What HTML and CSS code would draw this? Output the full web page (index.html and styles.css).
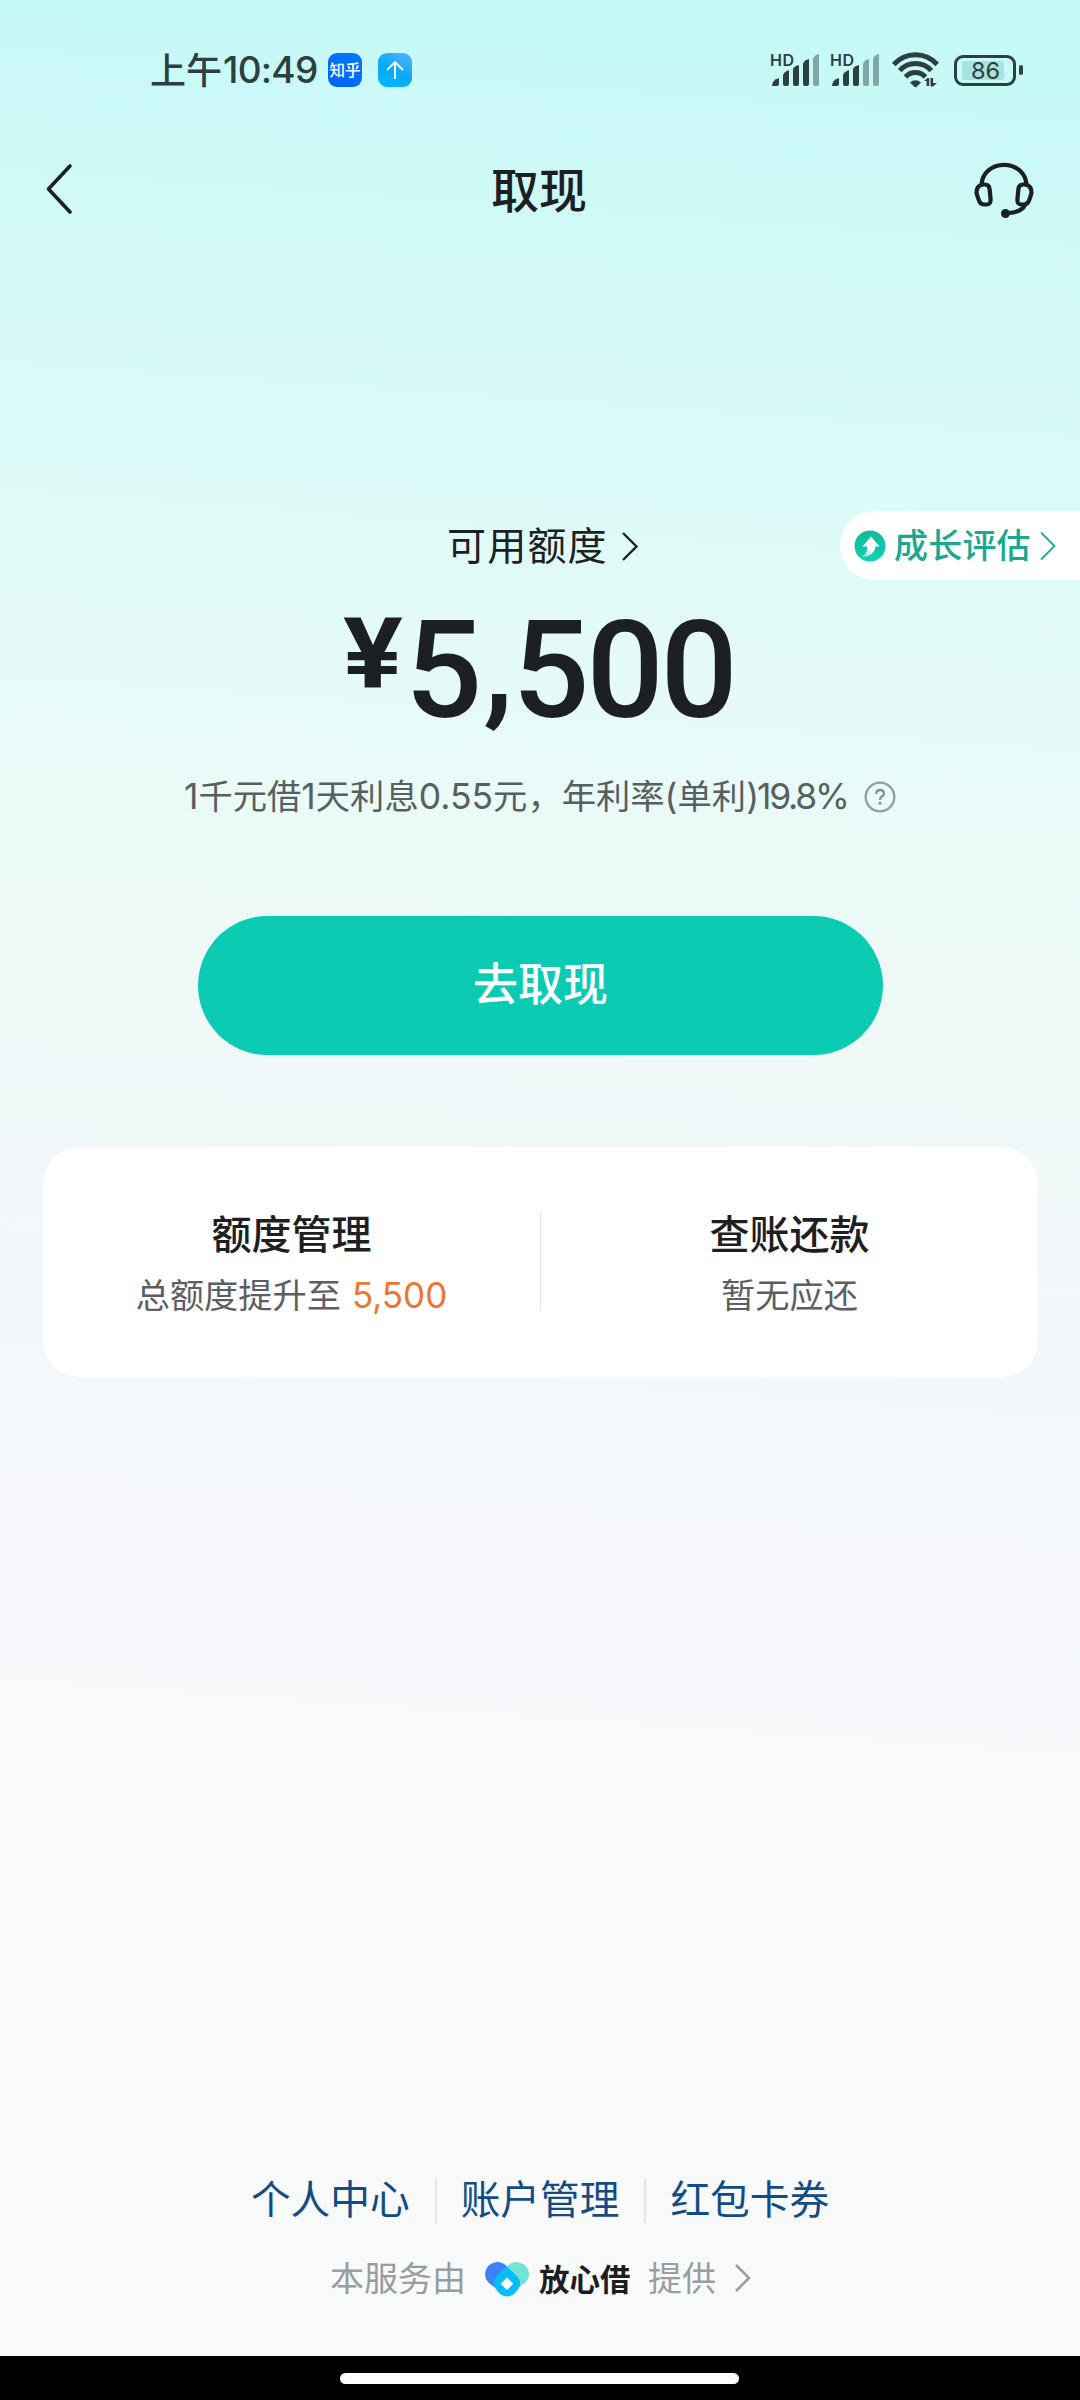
FILE: index.html
```html
<!DOCTYPE html>
<html lang="zh-CN">
<head>
<meta charset="utf-8">
<title>取现</title>
<link rel="stylesheet" href="styles.css">
</head>
<body>
<div class="screen">
  <header class="status">
    <div class="clock"><span class="cjk">上午</span><span class="num">10:49</span></div>
    <div class="app zhihu">知乎</div>
    <div class="app upload"><svg width="34" height="34" viewBox="0 0 34 34"><path d="M17 26V9M9 17l8-8 8 8" fill="none" stroke="#fff" stroke-width="1.9"/></svg></div>
    <div class="system">
      <svg width="50" height="42" viewBox="0 -4 50 42" fill="#2c4042"><text x="0" y="13" class="hd" textLength="24">HD</text><path d="M2 33q0-6 7-8v6q0 2-2 2z"/><path d="M13 22q1-3 6-5v14q0 2-2 2h-2q-2 0-2-2z"/><path d="M23 16q1-3 6-4v19q0 2-2 2h-2q-2 0-2-2z"/><path d="M33 11q1-4 6-5v25q0 2-2 2h-2q-2 0-2-2z"/><path opacity=".45" d="M43 6q1-4 6-5v30q0 2-2 2h-2q-2 0-2-2z"/></svg>
      <svg width="50" height="42" viewBox="0 -4 50 42" fill="#2c4042"><text x="0" y="13" class="hd" textLength="24">HD</text><path d="M2 33q0-6 7-8v6q0 2-2 2z"/><path d="M13 22q1-3 6-5v14q0 2-2 2h-2q-2 0-2-2z"/><path d="M23 16q1-3 6-4v19q0 2-2 2h-2q-2 0-2-2z"/><path opacity=".45" d="M33 11q1-4 6-5v25q0 2-2 2h-2q-2 0-2-2z"/><path opacity=".45" d="M43 6q1-4 6-5v30q0 2-2 2h-2q-2 0-2-2z"/></svg>
      <svg class="wifi" width="48" height="36" viewBox="0 0 48 36"><g fill="none" stroke="#2c4042" stroke-width="4.900"><path d="M1.800 12.500A29 29 0 0 1 45.200 12.500"/><path d="M7.700 18.700A21 21 0 0 1 39.300 18.700"/><path d="M13.500 25A13.500 13.500 0 0 1 33.500 25"/></g><path d="M18 30.500q5.500-4.500 11 0l-4 4q-1.500 1.500-3 0zM32 29l3.500-3h1.700v8h-2.600v-5zM38.500 26h2.600v5H45l-4 3.500h-2.500z" fill="#2c4042"/></svg>
      <div class="battery"><span class="num">86</span></div><i class="cap"></i>
    </div>
  </header>
  <nav class="nav">
    <svg class="back" width="30" height="54" viewBox="0 0 30 54"><path d="M26 4L4.500 27 26 50" fill="none" stroke="#1c2023" stroke-width="3.600" stroke-linecap="round" stroke-linejoin="round"/></svg>
    <h1>取现</h1>
    <svg width="60" height="58" viewBox="0 0 60 58" fill="none" stroke="#1b2023" stroke-width="4.200" stroke-linecap="round"><path d="M7.500 23C8 11 18 2.800 30 2.800S52 11 52.500 23"/><path d="M8.500 22.500h2.500q4 0 4.600 4.500l1 10.500q.3 5-4.200 5h-2q-4.400 0-5.800-5L2.500 31q0-7.500 6-8.500z"/><path d="M51.500 22.500H49q-4 0-4.600 4.500l-1 10.500q-.3 5 4.200 5h2q4.400 0 5.800-5l2.100-6.500q0-7.500-6-8.500z"/><path d="M51 43q-3.500 7-16 8"/><circle cx="31.500" cy="51.500" r="3.300" fill="#1b2023" stroke-width="2.500"/></svg>
  </nav>
  <section class="limit">
    <div class="limit-label"><span>可用额度</span><svg width="18" height="32" viewBox="0 0 18 32"><path d="M2 3l13.500 13.500L2 30" fill="none" stroke="#1c2023" stroke-width="2.400"/></svg></div>
    <div class="growth"><svg width="32" height="32" viewBox="0 0 32 32"><defs><linearGradient id="arrowFade" x1="0" y1="1" x2=".5" y2="0"><stop offset="0" stop-color="#fff" stop-opacity=".25"/><stop offset=".5" stop-color="#fff"/></linearGradient><linearGradient id="disc" x1="0" y1="0" x2="0" y2="1"><stop offset="0" stop-color="#14b69b"/><stop offset="1" stop-color="#10d2b2"/></linearGradient></defs><circle cx="16" cy="16" r="15.500" fill="url(#disc)"/><path d="M17 6.500L25.500 16.500H21.300Q20.500 26 7.500 27.500 13.500 23 13.300 16.500H8.500z" fill="url(#arrowFade)"/></svg><span>成长评估</span><svg width="18" height="30" viewBox="0 0 18 30"><path d="M2 1.500L15.500 15 2 28.500" fill="none" stroke="#1aa891" stroke-width="1.800"/></svg></div>
  </section>
  <div class="amount"><span class="yen">¥</span><span class="digits">5<i>,</i>500</span></div>
  <div class="rate"><span class="rate-text"><b>1</b>千元借<b>1</b>天利息<b>0.55</b>元，年利率<b>(</b>单利<b class="tight">)19.8%</b></span><svg width="32" height="32" viewBox="0 0 32 32"><circle cx="16" cy="16" r="14.300" fill="none" stroke="#959d9e" stroke-width="2.300"/><path d="M12.300 13q0-4 3.800-4t3.800 3.400q0 2-2 3.200t-1.800 3.300" fill="none" stroke="#878e90" stroke-width="2.300"/><circle cx="16" cy="22.300" r="1.500" fill="#878e90"/></svg></div>
  <button class="withdraw">去取现</button>
  <section class="card">
    <div class="cell"><h2>额度管理</h2><p>总额度提升至<em>5,500</em></p></div>
    <div class="cell"><h2>查账还款</h2><p>暂无应还</p></div>
  </section>
  <footer class="footer">
    <div class="links"><a><span>个人中心</span></a><a><span>账户管理</span></a><a><span>红包卡券</span></a></div>
    <div class="provider"><span>本服务由</span><svg class="heart" width="46" height="35" viewBox="0 0 46 35"><path d="M1 12A12.500 12.500 0 0 1 22 3.500L31 12 14 28 5 21Q1 17 1 12z" fill="#3f82f6"/><path d="M45 12A12.500 12.500 0 0 0 24 3.500L14 13 31 28 41 21Q45 17 45 12z" fill="#75e3d4"/><path d="M23 4.500L33 14Q39 21 33.500 28 29 34.500 23 34.500T12.500 28Q7 21 13 14z" fill="#06bdfb"/><path d="M23 15.500l6.300 6.300-6.300 6.300-6.300-6.300z" fill="#fff"/></svg><strong>放心借</strong><span>提供</span><svg class="more" width="18" height="30" viewBox="0 0 18 30"><path d="M2 2l13 13L2 28" fill="none" stroke="#999ca0" stroke-width="2.500"/></svg></div>
  </footer>
  <div class="gesture"><i></i></div>
</div>
</body>
</html>
```
FILE: styles.css
```css
* { box-sizing: border-box; }
body { margin: 0; }
svg { display: block; flex: none; }
h1, h2, p { margin: 0; font-weight: 500; }

.screen {
  width: 1080px;
  height: 2400px;
  display: flex;
  flex-direction: column;
  overflow: hidden;
  font-family: "Noto Sans CJK SC", sans-serif;
  color: #1d2022;
  background: linear-gradient(184deg, #c3f9f7 0%, #cdf9f7 8%, #dbfaf7 20%, #e8fbf8 32%, #eef9f7 42%, #f3f7fa 54%, #f6f8fb 68%, #f8faf9 92%, #f8faf9 100%);
}

.num { font-family: Inter, sans-serif; }

.status {
  height: 140px;
  padding-left: 150px;
  display: flex;
  align-items: center;
  color: #2c4042;
}
.clock {
  width: 178px;
  display: flex;
  align-items: center;
  white-space: nowrap;
  line-height: 50px;
  font-weight: 500;
}
.clock .cjk { font-size: 36px; width: 73px; padding-bottom: 5px; }
.clock .num { font-size: 37px; letter-spacing: -0.7px; }
.app {
  width: 34px;
  height: 34px;
  border-radius: 9px;
  color: #fff;
}
.zhihu {
  background: linear-gradient(200deg, #0079ff, #0062f8);
  font-size: 15.500px;
  font-weight: 500;
  line-height: 33px;
  text-align: center;
}
.upload { margin-left: 16px; background: linear-gradient(210deg, #58b2ff, #06a9fb 55%, #00bbff); }
.system {
  margin-left: auto;
  margin-right: 57px;
  display: flex;
  align-items: center;
}
.system svg + svg { margin-left: 10px; }
.system .wifi { margin-left: 12px; }
.hd { font: 600 16px Inter, sans-serif; }
.battery {
  width: 62px;
  height: 31px;
  margin-left: 14px;
  padding: 3px 10px 3px 5px;
  border: 3px solid #2c4042;
  border-radius: 9px;
  text-align: center;
}
.battery .num {
  display: block;
  height: 19px;
  margin-right: -1px;
  padding-left: 5px;
  border-radius: 3px;
  background: #a8e2df;
  font-size: 23.500px;
  line-height: 20px;
}
.cap {
  width: 4px;
  height: 10px;
  margin-left: 3px;
  border-radius: 2px;
  background: #2c4042;
}

.nav {
  height: 101px;
  padding: 0 46px 0 44px;
  display: flex;
  align-items: center;
  justify-content: space-between;
}
.nav .back { margin-bottom: 3px; }
.nav h1 { font-size: 48px; line-height: 60px; padding: 0 0 8px 30px; }

.limit {
  height: 69px;
  margin-top: 270px;
  display: grid;
  grid-template-columns: 1fr 240px;
  align-items: center;
}
.limit-label {
  padding-left: 447px;
  display: flex;
  align-items: center;
  gap: 13px;
  font-size: 39px;
  letter-spacing: 1.2px;
  line-height: 56px;
}
.limit-label span { padding-bottom: 6px; }
.growth {
  height: 69px;
  padding-left: 14px;
  display: flex;
  align-items: center;
  border-radius: 35px 0 0 35px;
  background: #fff;
  color: #1aa891;
  font-size: 34px;
  font-weight: 500;
}
.growth span { margin: 0 8px 0 8px; padding-bottom: 4px; letter-spacing: .2px; }

.amount {
  height: 171px;
  padding-left: 343px;
  display: flex;
  font-family: Roboto, sans-serif;
}
.yen {
  width: 62px;
  font-size: 98px;
  line-height: 149px;
  font-weight: 700;
  transform: scaleX(1.14);
  transform-origin: left;
}
.digits { font-size: 136px; line-height: 182px; font-weight: 500; letter-spacing: -3.200px; }
.digits i {
  display: inline-block;
  margin: 0 2px 0 4px;
  font-style: normal;
  transform: translateY(-8px);
}

.rate {
  height: 92px;
  padding-left: 184px;
  display: flex;
  align-items: center;
  color: #56605f;
}
.rate-text { width: 680px; padding-bottom: 6px; font-size: 34.300px; white-space: nowrap; }
.rate b { font: 400 35.500px Inter, sans-serif; }
.rate .tight { letter-spacing: -2.200px; }

.withdraw {
  width: 685px;
  height: 139px;
  margin: 73px auto 0 198px;
  padding: 0 0 9px;
  border: 0;
  border-radius: 70px;
  background: #0bccb2;
  color: #fff;
  font: 500 45px "Noto Sans CJK SC", sans-serif;
}

.card {
  height: 230px;
  margin: 92px 42px 0 43px;
  padding-top: 65px;
  display: grid;
  grid-template-columns: 497px 1fr;
  border-radius: 37px;
  background: #fff;
  text-align: center;
}
.cell { height: 99px; }
.cell + .cell { border-left: 1px solid #e2e3e5; }
.cell h2 { font-size: 40px; line-height: 40px; }
.cell p { margin-top: 13px; font-size: 34.200px; line-height: 56px; font-weight: 400; color: #5b5e65; }
.cell em { margin-left: 11px; font: 400 35px Inter, sans-serif; color: #ee7531; }

.footer {
  flex: 1;
  padding-top: 801px;
}
.links {
  height: 45px;
  display: flex;
  justify-content: center;
  align-items: center;
  color: #124c86;
  font-size: 39.700px;
}
.links a { height: 45px; padding: 0 25px; }
.links span { display: block; line-height: 38px; }
.links a + a { padding-left: 24px; border-left: 2px solid #e2e4e5; }
.provider {
  height: 60px;
  margin-top: 25px;
  padding-left: 330px;
  display: flex;
  align-items: center;
  color: #999ca0;
  font-size: 34px;
}
.provider span { padding-bottom: 3px; }
.heart { margin: 2px 9px 0 18px; }
.provider strong {
  width: 109px;
  padding-bottom: 1px;
  color: #1b1d1f;
  font-size: 30.500px;
  font-weight: 700;
}
.more { margin-left: 18px; }

.gesture {
  height: 44px;
  flex: none;
  padding-top: 17px;
  background: #000;
}
.gesture i {
  display: block;
  width: 399px;
  height: 11px;
  margin-left: 340px;
  border-radius: 6px;
  background: #fff;
}
```
